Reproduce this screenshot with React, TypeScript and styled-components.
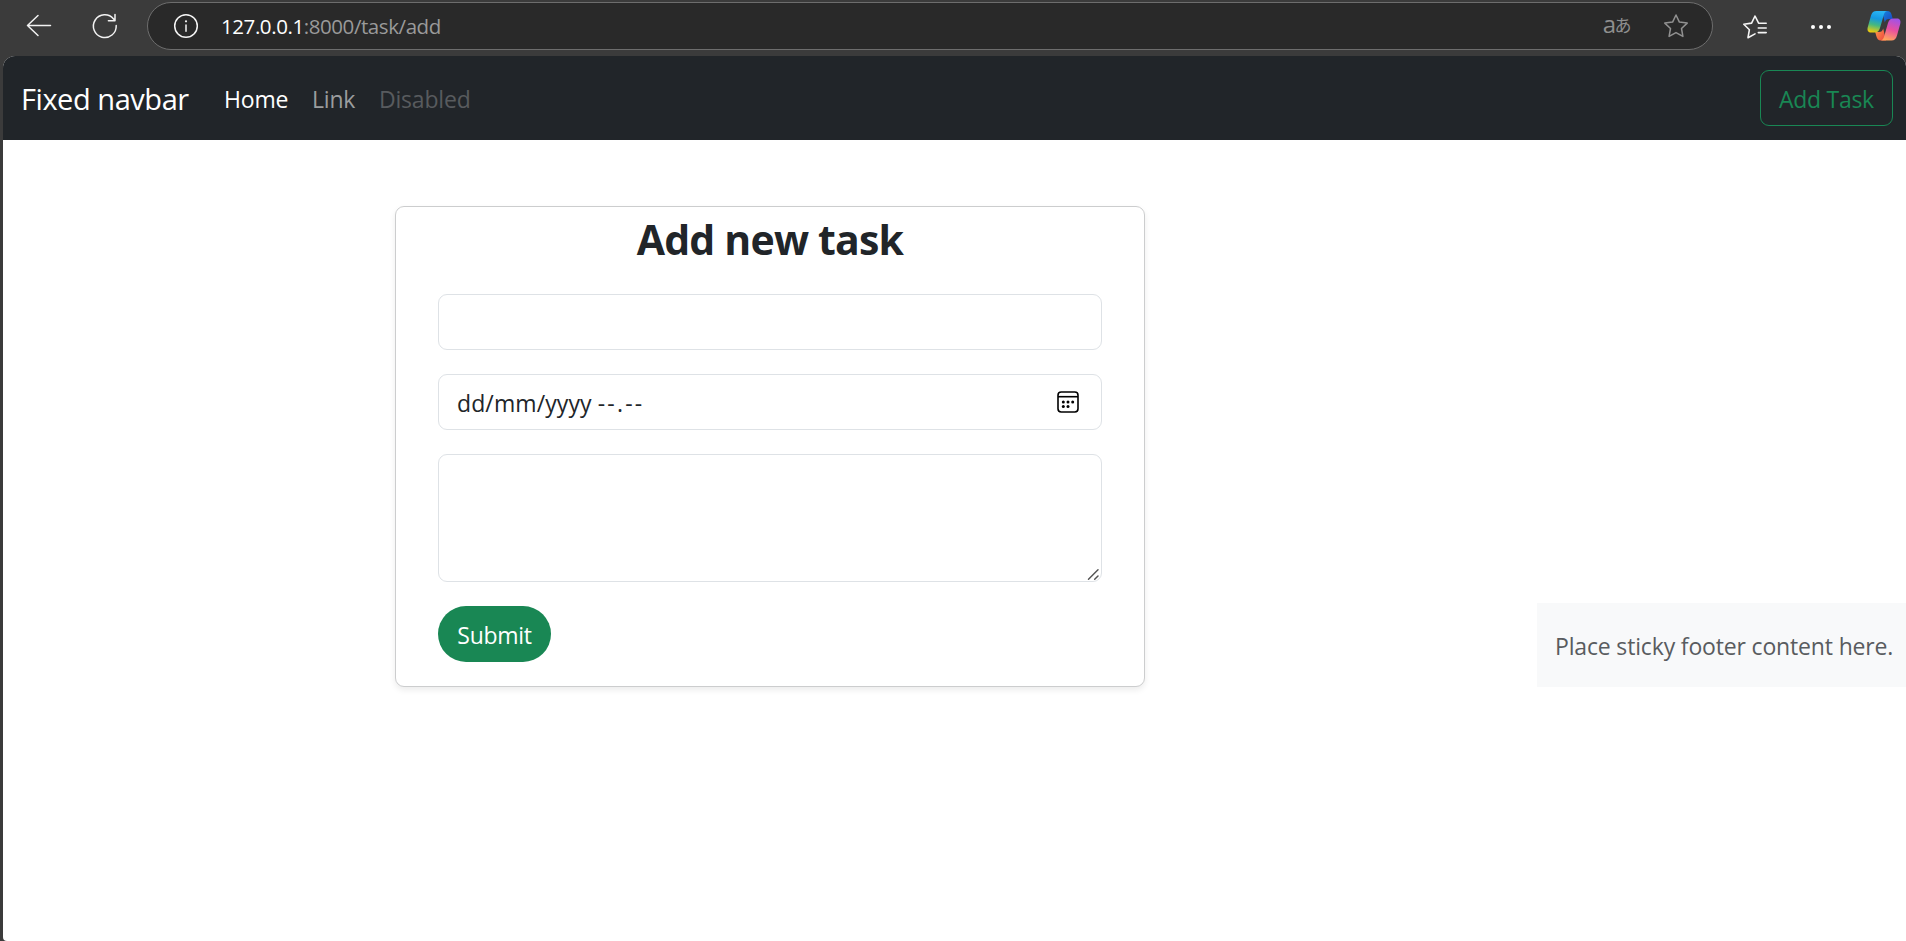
import React from "react";
import styled, { createGlobalStyle } from "styled-components";

const GlobalStyle = createGlobalStyle`
  *, *::before, *::after { box-sizing: border-box; }
  html, body { margin: 0; padding: 0; }
  body {
    font-family: "Segoe UI", "Open Sans", "Noto Sans", sans-serif;
    font-size: 23px;
    color: #212529;
    background: #3b3b3b;
    overflow: hidden;
  }
`;

const Window = styled.div`
  display: flex;
  flex-direction: column;
  width: 100%;
  height: 941px;
  background: #3b3b3b;
`;

const Toolbar = styled.header`
  display: flex;
  align-items: flex-start;
  height: 56px;
  flex: none;
  padding-left: 25px;
`;

const ToolButton = styled.span<{ $gap: number; $top: number }>`
  display: flex;
  flex: none;
  margin-right: ${(p) => p.$gap}px;
  margin-top: ${(p) => p.$top}px;
`;

const AddressBar = styled.div`
  display: flex;
  align-items: center;
  flex: none;
  width: 1566px;
  height: 48px;
  margin-top: 2px;
  margin-right: 29px;
  padding: 0 23px 0 25px;
  border: 1px solid #6d6d6d;
  border-radius: 24px;
  background: #292929;
  svg { flex: none; }
`;

const Url = styled.span`
  flex: 1;
  margin-left: 22px;
  font-size: 20.5px;
  line-height: 46px;
  letter-spacing: -0.42px;
  color: #9a9a9a;
  white-space: nowrap;
`;

const Host = styled.span`
  color: #fff;
`;

const Translate = styled.span`
  display: flex;
  align-items: center;
  margin-right: 33px;
  color: #8f8f8f;
  font-size: 24px;
  line-height: 30px;
  letter-spacing: -1.5px;
  padding-bottom: 5px;
`;

const Kana = styled.span`
  font-family: "Noto Sans CJK JP", sans-serif;
  font-size: 17px;
  line-height: 30px;
  padding-top: 3px;
`;

const Page = styled.div`
  display: flex;
  flex-direction: column;
  flex: 1;
  margin-left: 3px;
  border-radius: 12px 10px 0 4px;
  background: #fff;
  overflow: hidden;
`;

const Navbar = styled.nav`
  display: flex;
  align-items: center;
  height: 84px;
  flex: none;
  padding: 0 13px 0 18px;
  background: #212529;
  white-space: nowrap;
`;

const Brand = styled.a`
  width: 203px;
  padding-top: 1px;
  font-size: 29px;
  letter-spacing: -0.45px;
  color: #fff;
`;

const NavLink = styled.a<{ $color: string; $width: number }>`
  width: ${(p) => p.$width}px;
  padding-top: 2px;
  letter-spacing: -0.2px;
  color: ${(p) => p.$color};
`;

const OutlineButton = styled.button`
  width: 133px;
  height: 56px;
  margin-left: auto;
  padding: 1px 0 0;
  border: 1px solid #198754;
  border-radius: 9px;
  background: transparent;
  color: #198754;
  font: inherit;
  letter-spacing: -0.3px;
`;

const Content = styled.main`
  display: flex;
  justify-content: space-between;
  align-items: flex-end;
  margin-top: 66px;
  padding-left: 392px;
`;

const Card = styled.form`
  display: flex;
  flex-direction: column;
  width: 750px;
  height: 481px;
  padding: 0 42px;
  border: 1px solid #cccdce;
  border-radius: 9px;
  background: #fff;
  box-shadow: 0 3px 6px rgba(0, 0, 0, 0.08);
`;

const Title = styled.h1`
  margin: 7px 0 30px;
  font-size: 41px;
  font-weight: 700;
  line-height: 50px;
  letter-spacing: -0.8px;
  text-align: center;
  white-space: nowrap;
`;

const Field = styled.div<{ $height: number }>`
  display: flex;
  align-items: center;
  justify-content: space-between;
  flex: none;
  height: ${(p) => p.$height}px;
  margin-bottom: 24px;
  padding: 0 22px 0 18px;
  border: 1px solid #dee2e6;
  border-radius: 9px;
`;

const TextArea = styled(Field)`
  align-items: flex-end;
  justify-content: flex-end;
  padding: 0 1px 0 0;
`;

const DateText = styled.span`
  padding-top: 2px;
  letter-spacing: 0.1px;
  white-space: pre;
`;

const TimeText = styled.span`
  letter-spacing: 2.2px;
`;

const CalendarSlot = styled.span`
  display: flex;
  margin-bottom: 1px;
`;

const Submit = styled.button`
  width: 113px;
  height: 56px;
  padding: 1px 0 0;
  border: 0;
  border-radius: 28px;
  background: #198754;
  color: #fff;
  font: inherit;
  letter-spacing: -0.3px;
`;

const Footer = styled.footer`
  display: flex;
  align-items: center;
  width: 369px;
  height: 84px;
  padding: 2px 0 0 18px;
  background: #f8f9fa;
  color: #595c5f;
  letter-spacing: -0.16px;
  white-space: nowrap;
`;

const BackIcon = () => (
  <svg width="28" height="24" viewBox="0 0 28 24" fill="none" stroke="#f2f2f2" strokeWidth="1.5" strokeLinecap="round" strokeLinejoin="round">
    <path d="M25.5 11.5H2.5M13 1.5L2.5 11.5L13 21.5" />
  </svg>
);

const ReloadIcon = () => (
  <svg width="28" height="28" viewBox="0 0 28 28" fill="none" stroke="#f2f2f2" strokeWidth="1.5" strokeLinecap="round" strokeLinejoin="round">
    <path d="M25.2 13.6A11.4 11.4 0 1 1 22.6 6.9L24 8.6M24 2.6V8.8H17.4" />
  </svg>
);

const InfoIcon = () => (
  <svg width="26" height="26" viewBox="0 0 26 26" fill="none" stroke="#f5f5f5" strokeWidth="1.5" strokeLinecap="round">
    <circle cx="13" cy="13" r="11.3" />
    <path d="M13 12V18.3" />
    <circle cx="13" cy="8.3" r="1.1" fill="#f5f5f5" stroke="none" />
  </svg>
);

const StarIcon = () => (
  <svg width="26" height="26" viewBox="0 0 26 26" fill="none" stroke="#919191" strokeWidth="1.5" strokeLinejoin="round">
    <path d="M13 2L16.4 9.1L24.2 10.1L18.5 15.5L19.9 23.4L13 19.6L6.1 23.4L7.5 15.5L1.8 10.1L9.6 9.1Z" />
  </svg>
);

const FavoritesIcon = () => (
  <svg width="26" height="26" viewBox="0 0 26 26" fill="none" stroke="#f5f5f5" strokeWidth="1.6" strokeLinecap="round" strokeLinejoin="round">
    <path d="M24.2 9.2H16.6L13 2L9.6 9.1L1.8 10.2L7.4 15.7L6 23.7L13 19.9" />
    <path d="M16.3 14H24.2M16.3 18.6H24.2" />
  </svg>
);

const MoreIcon = () => (
  <svg width="22" height="6" viewBox="0 0 22 6" fill="#fff">
    <circle cx="3" cy="3" r="2" />
    <circle cx="11" cy="3" r="2" />
    <circle cx="19" cy="3" r="2" />
  </svg>
);

const CopilotIcon = () => (
  <svg width="34" height="31" viewBox="0 0 34 31">
    <defs>
      <linearGradient id="cpLeft" x1="0.5" y1="0" x2="0.3" y2="1">
        <stop offset="0" stopColor="#28b4f4" />
        <stop offset="0.35" stopColor="#1598e0" />
        <stop offset="0.65" stopColor="#45b880" />
        <stop offset="1" stopColor="#f2cc0c" />
      </linearGradient>
      <linearGradient id="cpTop" x1="0" y1="0" x2="1" y2="1">
        <stop offset="0" stopColor="#1687dc" />
        <stop offset="1" stopColor="#1b3fc0" />
      </linearGradient>
      <linearGradient id="cpRight" x1="0.7" y1="0" x2="0.4" y2="1">
        <stop offset="0" stopColor="#a052e8" />
        <stop offset="0.5" stopColor="#e84fa0" />
        <stop offset="1" stopColor="#ffa45c" />
      </linearGradient>
      <linearGradient id="cpBottom" x1="0" y1="0" x2="1" y2="0.6">
        <stop offset="0" stopColor="#ff9a48" />
        <stop offset="1" stopColor="#ee4d42" />
      </linearGradient>
    </defs>
    <path d="M15 1H20C23 1 24 2.5 24.7 5L25.8 9H22C19.5 9 18.5 10 17.8 12.5Z" fill="url(#cpTop)" />
    <path d="M19 30.5H14C11 30.5 10 28.5 9.3 26L8.2 22H12C14.5 22 15.5 21 16.2 18.5Z" fill="url(#cpBottom)" />
    <path d="M9.5 1H20C18 1.5 17.3 3 16.6 5.5L13 18C12 21.3 10.5 22.5 7.5 22.5H4C.8 22.5 0 20 .8 17L4 5.5C5 2.3 6.5 1 9.5 1Z" fill="url(#cpLeft)" />
    <path d="M24.5 30.5H14C16 30 16.7 28 17.4 25.5L21 13C22 9.7 23.5 8.5 26.5 8.5H30C33.2 8.5 34 11 33.2 14L30 25.5C29 28.7 27.5 30.5 24.5 30.5Z" fill="url(#cpRight)" />
  </svg>
);

const CalendarIcon = () => (
  <svg width="22" height="22" viewBox="0 0 22 22" fill="none" stroke="#000" strokeWidth="1.6">
    <rect x="1" y="1" width="20" height="20" rx="3.2" />
    <path d="M1 5.7H21" />
    <g fill="#000" stroke="none">
      <circle cx="6.3" cy="11" r="1.5" />
      <circle cx="11" cy="11" r="1.5" />
      <circle cx="15.7" cy="11" r="1.5" />
      <circle cx="6.3" cy="15.6" r="1.5" />
      <circle cx="11" cy="15.6" r="1.5" />
    </g>
  </svg>
);

const ResizeGrip = () => (
  <svg width="13" height="13" viewBox="0 0 13 13" stroke="#555" strokeWidth="1.5" strokeLinecap="round">
    <path d="M1.5 11.3L11 1.8M7.7 11.3L11 8" />
  </svg>
);

export default function App() {
  return (
    <>
      <GlobalStyle />
      <Window>
        <Toolbar>
          <ToolButton $gap={38} $top={14}><BackIcon /></ToolButton>
          <ToolButton $gap={28} $top={12}><ReloadIcon /></ToolButton>
          <AddressBar>
            <InfoIcon />
            <Url><Host>127.0.0.1</Host>:8000/task/add</Url>
            <Translate>a<Kana>あ</Kana></Translate>
            <StarIcon />
          </AddressBar>
          <ToolButton $gap={42} $top={14}><FavoritesIcon /></ToolButton>
          <ToolButton $gap={35} $top={24}><MoreIcon /></ToolButton>
          <ToolButton $gap={0} $top={10}><CopilotIcon /></ToolButton>
        </Toolbar>
        <Page>
          <Navbar>
            <Brand>Fixed navbar</Brand>
            <NavLink $color="#fff" $width={88}>Home</NavLink>
            <NavLink $color="#9b9d9e" $width={67}>Link</NavLink>
            <NavLink $color="#585b5e" $width={100}>Disabled</NavLink>
            <OutlineButton type="button">Add Task</OutlineButton>
          </Navbar>
          <Content>
            <Card>
              <Title>Add new task</Title>
              <Field $height={56} />
              <Field $height={56}>
                <DateText>dd/mm/yyyy <TimeText>--.--</TimeText></DateText>
                <CalendarSlot><CalendarIcon /></CalendarSlot>
              </Field>
              <TextArea $height={128}><ResizeGrip /></TextArea>
              <Submit type="button">Submit</Submit>
            </Card>
            <Footer>Place sticky footer content here.</Footer>
          </Content>
        </Page>
      </Window>
    </>
  );
}
